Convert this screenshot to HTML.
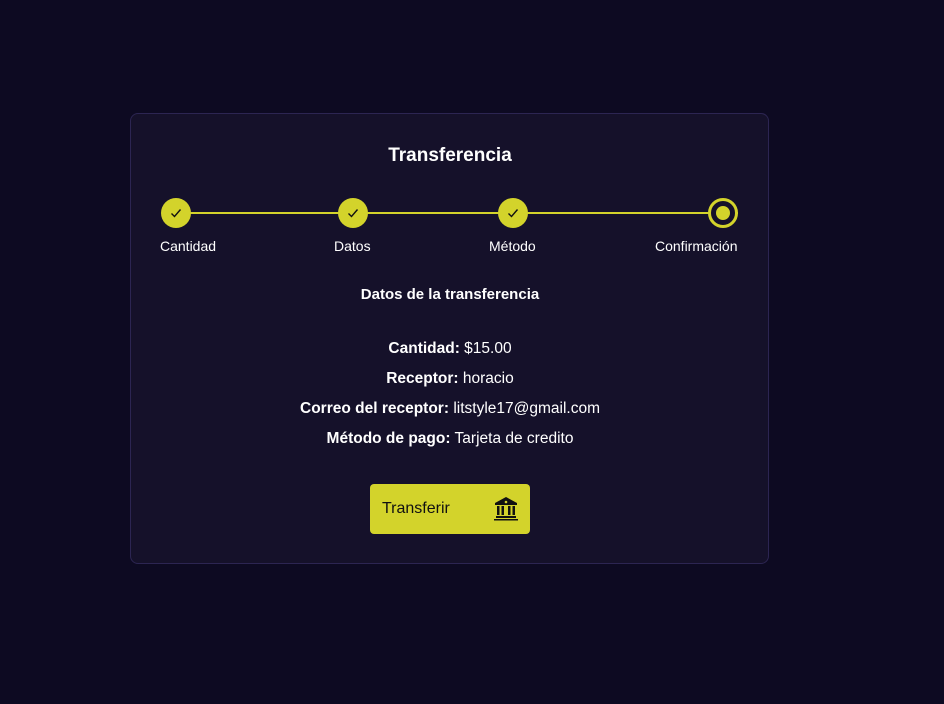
<!DOCTYPE html>
<html><head><meta charset="utf-8"><style>
body{margin:0;width:944px;height:704px;background:#0d0a22;font-family:"Liberation Sans",Roboto,sans-serif;color:#fff;position:relative;overflow:hidden}
.card{position:absolute;left:130px;top:113px;width:637px;height:449px;background:#15112a;border:1px solid #2c2552;border-radius:8px}
.line{position:absolute;left:176px;top:212px;width:562px;height:2px;background:#d3d32b}
.c{position:absolute;width:30px;height:30px;border-radius:50%;background:#d3d32b;top:198px}
.c svg{position:absolute;left:9px;top:9px}
.ring{position:absolute;left:708px;top:198px;width:24px;height:24px;border:3px solid #d3d32b;border-radius:50%;background:#15112a}
.ring:after{content:"";position:absolute;left:5px;top:5px;width:14px;height:14px;border-radius:50%;background:#d3d32b}
.lbl{position:absolute;top:238px;font-size:14px}
.row{position:absolute;left:130px;width:640px;text-align:center;font-size:15.5px}
.btn{position:absolute;left:370px;top:484px;width:160px;height:50px;background:#d3d32b;border-radius:4px;color:#111;font-size:16px}
</style></head><body>
<div class="card"></div>
<div class="row" style="top:145px;font-size:19px;font-weight:bold">Transferencia</div>
<div class="line"></div>
<div class="c" style="left:161px"><svg width="12" height="12" viewBox="0 0 12 12"><path d="M1.5 6.5l3 3 6-7" stroke="#111" stroke-width="1.4" fill="none"/></svg></div>
<div class="c" style="left:338px"><svg width="12" height="12" viewBox="0 0 12 12"><path d="M1.5 6.5l3 3 6-7" stroke="#111" stroke-width="1.4" fill="none"/></svg></div>
<div class="c" style="left:498px"><svg width="12" height="12" viewBox="0 0 12 12"><path d="M1.5 6.5l3 3 6-7" stroke="#111" stroke-width="1.4" fill="none"/></svg></div>
<div class="ring"></div>
<div class="lbl" style="left:160px">Cantidad</div>
<div class="lbl" style="left:334px">Datos</div>
<div class="lbl" style="left:489px">Método</div>
<div class="lbl" style="left:655px">Confirmación</div>
<div class="row" style="top:286px;font-weight:bold;font-size:15px">Datos de la transferencia</div>
<div class="row" style="top:340px"><b>Cantidad:</b> $15.00</div>
<div class="row" style="top:370px"><b>Receptor:</b> horacio</div>
<div class="row" style="top:400px"><b>Correo del receptor:</b> litstyle17@gmail.com</div>
<div class="row" style="top:430px"><b>Método de pago:</b> Tarjeta de credito</div>
<div class="btn"><span style="position:absolute;left:12px;top:16px">Transferir</span>
<svg style="position:absolute;left:123px;top:12px" width="26" height="26" viewBox="0 0 26 26"><path d="M13 1L2 7v2h22V7z" fill="#111"/><circle cx="13" cy="6" r="1.3" fill="#d3d32b"/><rect x="4" y="10" width="2.5" height="9" fill="#111"/><rect x="8.5" y="10" width="2.5" height="9" fill="#111"/><rect x="15" y="10" width="2.5" height="9" fill="#111"/><rect x="19.5" y="10" width="2.5" height="9" fill="#111"/><rect x="3" y="20" width="20" height="2" fill="#111"/><rect x="1" y="23" width="24" height="1.5" fill="#111"/></svg></div>
</body></html>
